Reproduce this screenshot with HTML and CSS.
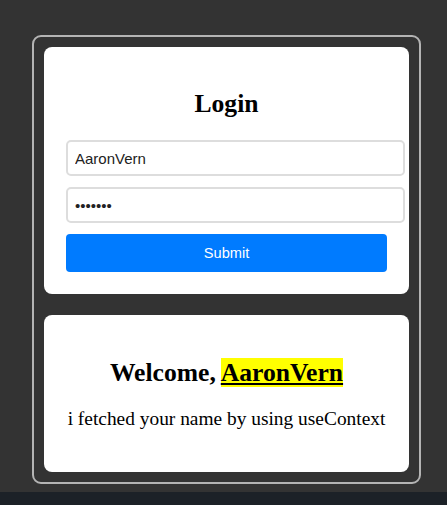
FILE: index.html
```html
<!DOCTYPE html>
<html lang="en">
<head>
<meta charset="utf-8">
<title>Login</title>
<link rel="stylesheet" href="styles.css">
</head>
<body>
<div class="page">
  <div class="frame">
    <div class="card login">
      <h2 class="title">Login</h2>
      <form class="form">
        <input class="field" type="text" value="AaronVern">
        <input class="field" type="password" value="1234567">
        <button class="submit" type="button">Submit</button>
      </form>
    </div>
    <div class="card welcome">
      <h2 class="title">Welcome, <span class="name">AaronVern</span></h2>
      <p class="note">i fetched your name by using useContext</p>
    </div>
  </div>
</div>
</body>
</html>
```

FILE: styles.css
```css
html {
  background: #1c2127;
}
body {
  margin: 0;
  font-family: "Liberation Serif", "Times New Roman", serif;
}
.page {
  background: #333333;
  height: 492px;
  padding: 35px 0 0 32px;
  box-sizing: border-box;
}
.frame {
  width: 389px;
  box-sizing: border-box;
  border: 2px solid #b4b4b4;
  border-radius: 9px;
  padding: 10px;
  display: flex;
  flex-direction: column;
  gap: 21px;
}
.card {
  background: #ffffff;
  border-radius: 8px;
  padding: 22px;
}
.title {
  font-size: 25.6px;
  font-weight: bold;
  text-align: center;
  margin: 20px 0 21px;
  color: #000;
  white-space: nowrap;
}
.form {
  display: flex;
  flex-direction: column;
  gap: 11px;
}
.field {
  box-sizing: border-box;
  width: calc(100% + 18px);
  height: 36px;
  border: 2px solid #dddddd;
  border-radius: 5px;
  padding: 0 7px;
  font-family: "Liberation Sans", Arial, sans-serif;
  font-size: 15px;
  color: #222;
  background: #fff;
  outline: none;
}
.submit {
  height: 38px;
  border: none;
  border-radius: 4px;
  background: #007bff;
  color: #ffffff;
  font-family: "Liberation Sans", Arial, sans-serif;
  font-size: 14.6px;
}
.welcome .title {
  margin: 21px 0 20px;
}
.name {
  background: #ffff00;
  text-decoration: underline;
}
.note {
  font-size: 19.4px;
  text-align: center;
  margin: 20px 0;
  color: #000;
  white-space: nowrap;
}
```
